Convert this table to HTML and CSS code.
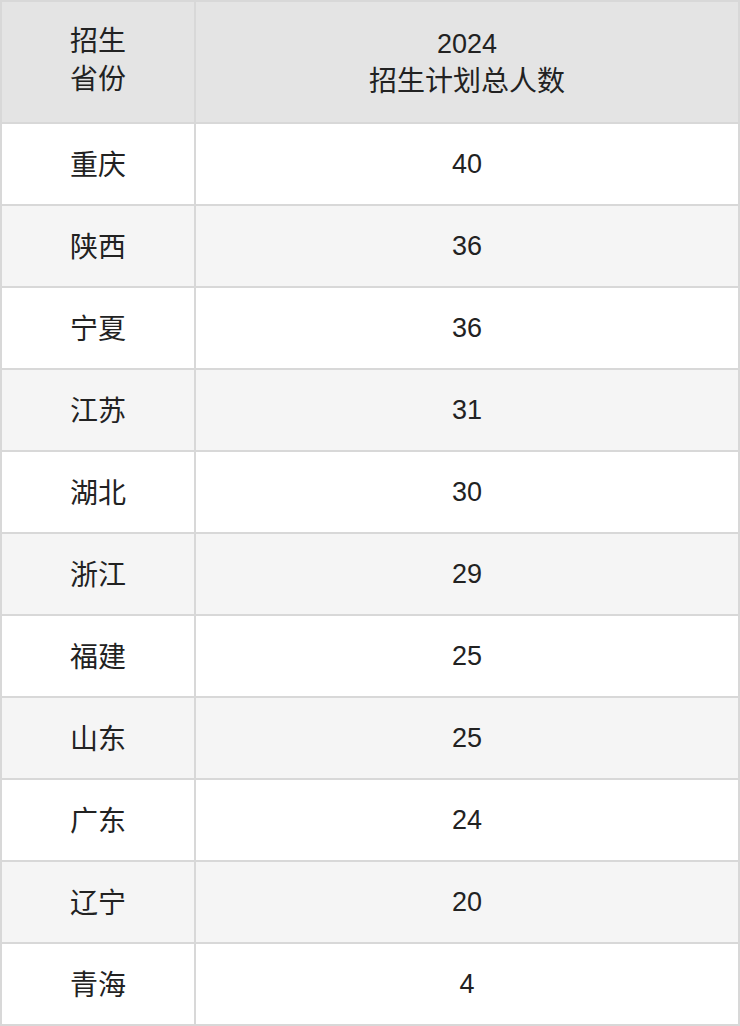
FILE: index.html
```html
<!DOCTYPE html>
<html lang="zh">
<head>
<meta charset="utf-8">
<link rel="stylesheet" href="styles.css">
</head>
<body>
<table class="plan">
  <thead>
    <tr><th class="prov">招生<br>省份</th><th><span class="digits">2024</span><br>招生计划总人数</th></tr>
  </thead>
  <tbody>
    <tr><td class="name">重庆</td><td class="digits">40</td></tr>
    <tr><td class="name">陕西</td><td class="digits">36</td></tr>
    <tr><td class="name">宁夏</td><td class="digits">36</td></tr>
    <tr><td class="name">江苏</td><td class="digits">31</td></tr>
    <tr><td class="name">湖北</td><td class="digits">30</td></tr>
    <tr><td class="name">浙江</td><td class="digits">29</td></tr>
    <tr><td class="name">福建</td><td class="digits">25</td></tr>
    <tr><td class="name">山东</td><td class="digits">25</td></tr>
    <tr><td class="name">广东</td><td class="digits">24</td></tr>
    <tr><td class="name">辽宁</td><td class="digits">20</td></tr>
    <tr><td class="name">青海</td><td class="digits">4</td></tr>
  </tbody>
</table>
</body>
</html>
```
FILE: styles.css
```css
html, body {
  margin: 0;
  padding: 0;
  background: #ffffff;
}
.plan {
  width: 740px;
  border-collapse: collapse;
  table-layout: fixed;
  font-family: "Liberation Sans", "Noto Sans CJK SC", sans-serif;
  font-size: 28px;
  color: #222222;
}
.plan th, .plan td {
  border: 2px solid #d8d8d8;
  text-align: center;
  vertical-align: middle;
  padding: 0;
  font-weight: normal;
}
.plan th {
  background: #e4e4e4;
  height: 120px;
  line-height: 37px;
}
.plan th.prov {
  width: 192px;
  height: 117px;
  line-height: 38px;
  padding-bottom: 3px;
}
.plan td {
  height: 80px;
}
.plan td.name {
  height: 77px;
  padding-bottom: 3px;
}
.plan .digits {
  font-size: 27px;
}
.plan tbody tr:nth-child(even) td {
  background: #f5f5f5;
}
```
